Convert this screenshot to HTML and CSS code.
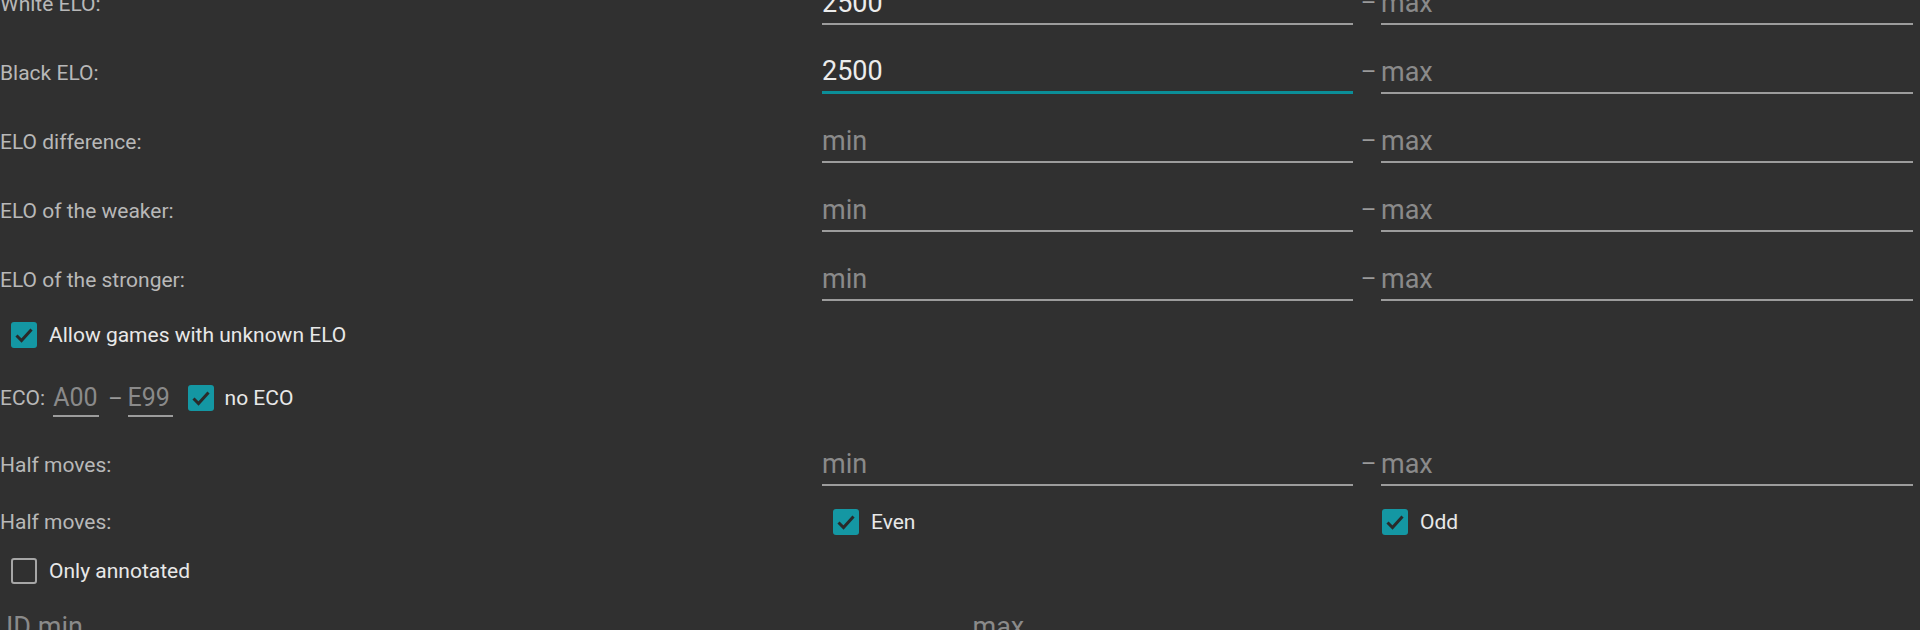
FILE: index.html
```html
<!DOCTYPE html>
<html lang="en">
<head>
    <meta charset="UTF-8">
    <title>Game filter</title>
    <link rel="stylesheet" href="styles.css">
</head>
<body>
<div class="filter">
    <div class="row range">
        <label class="caption">White ELO:</label>
        <input class="field" type="text" value="2500" placeholder="min">
        <span class="dash">–</span>
        <input class="field" type="text" placeholder="max">
    </div>
    <div class="row range">
        <label class="caption">Black ELO:</label>
        <input class="field active" type="text" value="2500" placeholder="min">
        <span class="dash">–</span>
        <input class="field" type="text" placeholder="max">
    </div>
    <div class="row range">
        <label class="caption">ELO difference:</label>
        <input class="field" type="text" placeholder="min">
        <span class="dash">–</span>
        <input class="field" type="text" placeholder="max">
    </div>
    <div class="row range">
        <label class="caption">ELO of the weaker:</label>
        <input class="field" type="text" placeholder="min">
        <span class="dash">–</span>
        <input class="field" type="text" placeholder="max">
    </div>
    <div class="row range">
        <label class="caption">ELO of the stronger:</label>
        <input class="field" type="text" placeholder="min">
        <span class="dash">–</span>
        <input class="field" type="text" placeholder="max">
    </div>

    <div class="row single">
        <label class="check">
            <span class="box on"><svg viewBox="0 0 26 26"><path d="M5.5 13.5l5 5 10-11"/></svg></span>
            Allow games with unknown ELO
        </label>
    </div>

    <div class="row eco">
        <label class="caption">ECO:</label>
        <input class="field small" type="text" placeholder="A00">
        <span class="eco-dash">–</span>
        <input class="field small" type="text" placeholder="E99">
        <label class="check eco-check">
            <span class="box on"><svg viewBox="0 0 26 26"><path d="M5.5 13.5l5 5 10-11"/></svg></span>
            no ECO
        </label>
    </div>

    <div class="row range">
        <label class="caption">Half moves:</label>
        <input class="field" type="text" placeholder="min">
        <span class="dash">–</span>
        <input class="field" type="text" placeholder="max">
    </div>
    <div class="row parity">
        <label class="caption">Half moves:</label>
        <label class="check even">
            <span class="box on"><svg viewBox="0 0 26 26"><path d="M5.5 13.5l5 5 10-11"/></svg></span>
            Even
        </label>
        <span></span>
        <label class="check odd">
            <span class="box on"><svg viewBox="0 0 26 26"><path d="M5.5 13.5l5 5 10-11"/></svg></span>
            Odd
        </label>
    </div>

    <div class="row annotated">
        <label class="check">
            <span class="box"></span>
            Only annotated
        </label>
    </div>

    <div class="row ids">
        <input class="field id" type="text" placeholder="ID min">
        <input class="field id" type="text" placeholder="max">
    </div>
</div>
</body>
</html>
```

FILE: styles.css
```css
body {
    margin: 0;
    padding: 0 7px 0 0;
    background: #303030;
    font-family: Roboto, "Noto Sans", sans-serif;
    overflow: hidden;
}

.filter {
    margin-top: -31px;
}

.row {
    display: grid;
    align-items: center;
}

.range {
    grid-template-columns: 822px 531px 28px 1fr;
    height: 69px;
}

.caption {
    font-size: 21px;
    color: #b8b8b8;
    white-space: nowrap;
}

.field {
    box-sizing: border-box;
    width: 100%;
    height: 42px;
    padding: 0;
    border: none;
    border-bottom: 2px solid #9c9c9c;
    background: transparent;
    font-family: Roboto, sans-serif;
    font-size: 27px;
    line-height: 40px;
    color: #ececec;
    outline: none;
}

.field::placeholder {
    color: #8a8a8a;
}

.field.active {
    border-bottom: 3px solid #0b8e98;
}

.dash {
    text-align: center;
    font-size: 24px;
    line-height: 40px;
    color: #9a9a9a;
    padding: 0 0 2px 3px;
}

.check {
    display: flex;
    align-items: center;
    font-size: 21px;
    color: #e8e8e8;
    white-space: nowrap;
}

.box {
    box-sizing: border-box;
    width: 26px;
    height: 26px;
    margin-right: 12px;
    border: 2px solid #a6a6a6;
    border-radius: 3px;
}

.box.on {
    background: #1497a3;
    border: none;
}

.box svg {
    display: block;
    width: 26px;
    height: 26px;
}

.box path {
    fill: none;
    stroke: #2a2a2a;
    stroke-width: 3;
}

.single {
    height: 42px;
    padding-left: 11px;
}

.eco {
    display: flex;
    box-sizing: border-box;
    height: 74px;
    padding-top: 10px;
}

.field.small {
    width: 46px;
    height: 38px;
    line-height: 36px;
    font-size: 25px;
    margin-left: 8px;
}

.eco-dash {
    font-size: 22px;
    color: #9a9a9a;
    margin: 0 5px 0 9px;
}

.eco .field.small + .eco-dash + .field.small {
    margin-left: 0;
    width: 45px;
}

.eco-check {
    margin-left: 15px;
}

.eco-check .box {
    margin-right: 11px;
}

.parity {
    grid-template-columns: 822px 531px 28px 1fr;
    height: 46px;
}

.even {
    padding-left: 11px;
}

.odd {
    padding-left: 1px;
}

.annotated {
    height: 52px;
    padding-left: 11px;
}

.ids {
    grid-template-columns: 1fr 1fr;
    column-gap: 20px;
    padding-top: 10px;
}

.field.id {
    padding-left: 6px;
}
```
